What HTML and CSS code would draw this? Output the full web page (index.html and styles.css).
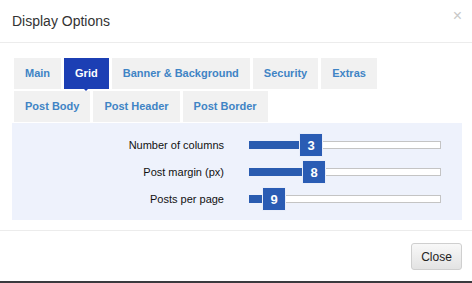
FILE: index.html
```html
<!DOCTYPE html>
<html>
    <head>
        <meta charset="UTF-8" />
        <meta name="viewport" content="width=device-width, initial-scale=1.0"/>
        <link rel="stylesheet" href="styles.css">
    </head>
    <body>
        <div class="modal">
            <div class="modal-header">
                <h4 class="modal-title">Display Options</h4>
                <span class="close-x">&times;</span>
            </div>
            <div class="modal-body">
                <ul class="tabs">
                    <li class="tab">Main</li>
                    <li class="tab active">Grid</li>
                    <li class="tab">Banner &amp; Background</li>
                    <li class="tab">Security</li>
                    <li class="tab">Extras</li>
                    <li class="break"></li>
                    <li class="tab">Post Body</li>
                    <li class="tab">Post Header</li>
                    <li class="tab">Post Border</li>
                </ul>
                <div class="panel">
                    <div class="row">
                        <label class="label">Number of columns</label>
                        <div class="slider">
                            <div class="fill" style="width: 58px"></div>
                            <span class="handle" style="left: 49px">3</span>
                        </div>
                    </div>
                    <div class="row">
                        <label class="label">Post margin (px)</label>
                        <div class="slider">
                            <div class="fill" style="width: 62px"></div>
                            <span class="handle" style="left: 52px">8</span>
                        </div>
                    </div>
                    <div class="row">
                        <label class="label">Posts per page</label>
                        <div class="slider">
                            <div class="fill" style="width: 20px"></div>
                            <span class="handle" style="left: 12px">9</span>
                        </div>
                    </div>
                </div>
            </div>
            <div class="modal-footer">
                <button class="btn">Close</button>
            </div>
        </div>
    </body>
</html>
```

FILE: styles.css
```css
body {
    margin: 0;
    background: #3a3a3e;
    font-family: "Liberation Sans", Arial, sans-serif;
}
.modal {
    background: #fff;
    height: 281px;
    box-sizing: border-box;
}
.modal-header {
    height: 43px;
    box-sizing: border-box;
    border-bottom: 1px solid #ececec;
    display: flex;
    align-items: center;
    justify-content: space-between;
    padding: 0 10px 0 12px;
}
.modal-title {
    margin: 0;
    font-size: 14px;
    font-weight: normal;
    color: #333;
}
.close-x {
    color: #c8c8c8;
    font-size: 16px;
    margin-top: -10px;
}
.modal-body {
    padding: 15px 10px 0 12px;
    height: 188px;
    box-sizing: border-box;
    border-bottom: 1px solid #ececec;
}
.tabs {
    list-style: none;
    margin: 0 0 1px 2px;
    padding: 0;
    display: flex;
    flex-wrap: wrap;
    row-gap: 1px;
}
.break {
    flex-basis: 100%;
    height: 0;
}
.tab {
    background: #f1f1f1;
    color: #3f84c5;
    font-size: 11px;
    font-weight: bold;
    height: 31px;
    line-height: 31px;
    padding: 0 11px;
    margin-right: 3px;
}
.tab.active {
    background: #1c3fb4;
    color: #fff;
    position: relative;
}
.tab.active::after {
    content: "";
    position: absolute;
    left: 50%;
    bottom: -2px;
    margin-left: -2px;
    border-left: 2px solid transparent;
    border-right: 2px solid transparent;
    border-top: 2px solid #1c3fb4;
}
.panel {
    background: #eef2fc;
    padding: 8px 0 8px;
}
.row {
    display: flex;
    align-items: center;
    height: 27px;
}
.label {
    width: 212px;
    text-align: right;
    font-size: 11px;
    color: #111;
}
.slider {
    position: relative;
    margin-left: 25px;
    width: 192px;
    height: 8px;
    background: #fff;
    border: 1px solid #c4c4c4;
    box-sizing: border-box;
}
.fill {
    position: absolute;
    left: -1px;
    top: -1px;
    height: 8px;
    background: #2a5cb0;
}
.handle {
    position: absolute;
    top: -9px;
    width: 24px;
    height: 24px;
    line-height: 24px;
    background: #2a5cb4;
    color: #fff;
    font-size: 13px;
    font-weight: bold;
    text-align: center;
    border: 1px solid #e9eefa;
    box-sizing: border-box;
}
.modal-footer {
    display: flex;
    justify-content: flex-end;
    padding: 12px 10px 0;
}
.btn {
    width: 51px;
    height: 27px;
    font-family: "Liberation Sans", Arial, sans-serif;
    font-size: 12px;
    color: #222;
    background: linear-gradient(#f8f8f8, #e3e3e3);
    border: 1px solid #cfcfcf;
    border-radius: 3px;
}
```
